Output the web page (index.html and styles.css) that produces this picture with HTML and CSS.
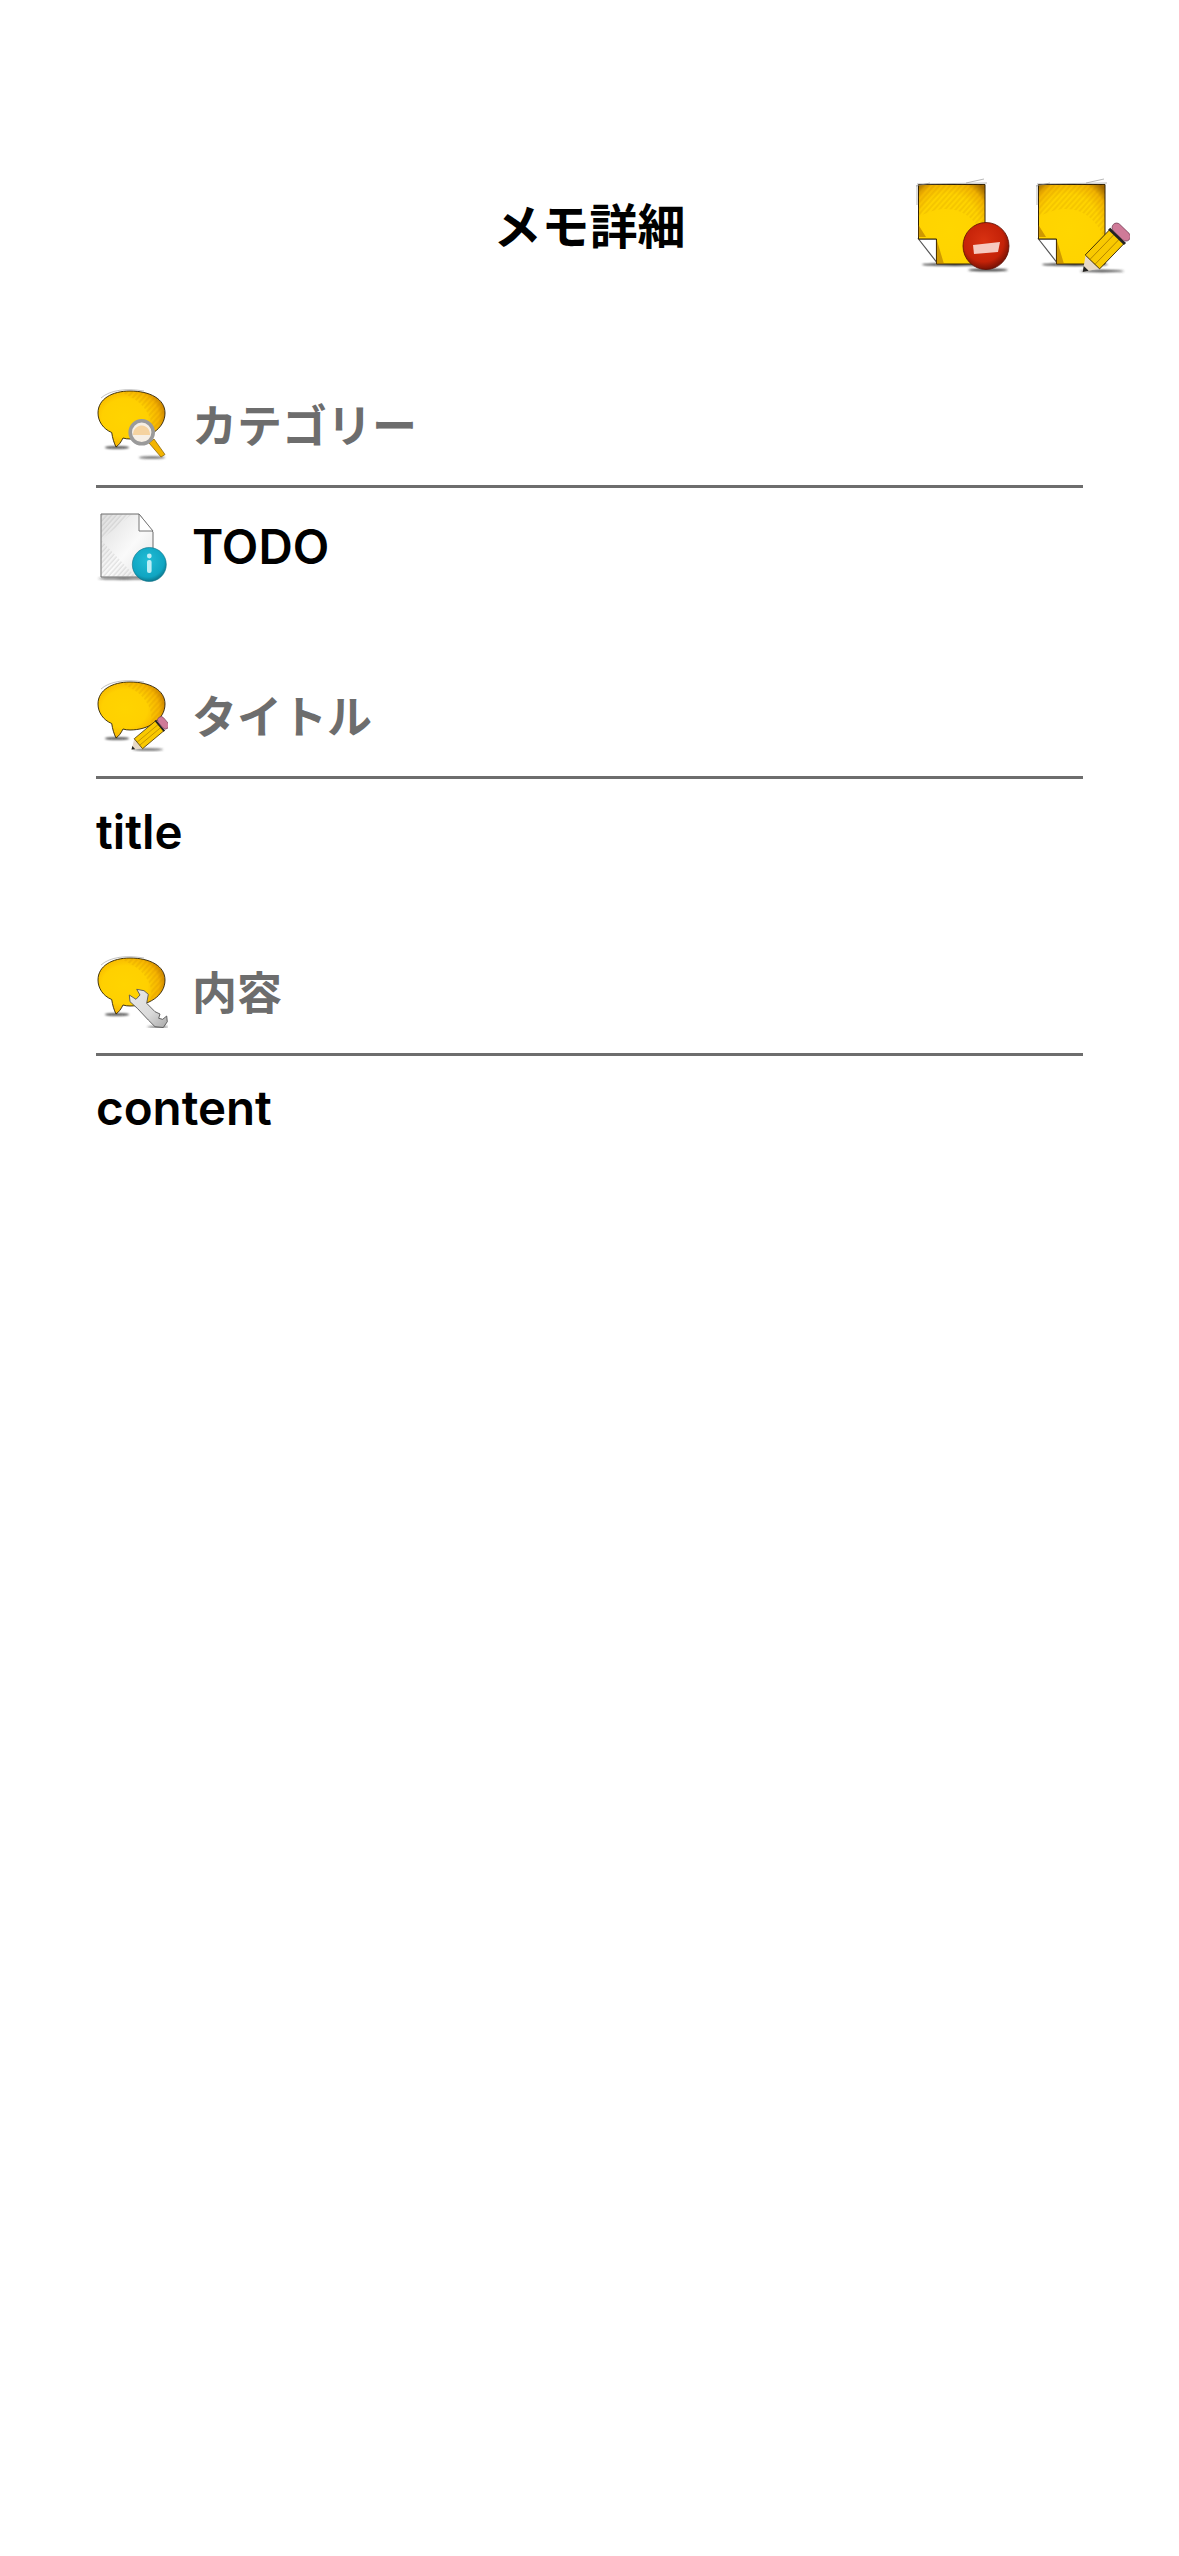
FILE: index.html
```html
<!DOCTYPE html>
<html lang="ja">
<head>
<meta charset="utf-8">
<title>メモ詳細</title>
<link rel="stylesheet" href="styles.css">
</head>
<body>
<svg class="sprite" xmlns="http://www.w3.org/2000/svg" aria-hidden="true">
  <defs>
    <radialGradient id="gBubble" cx="40%" cy="48%" r="62%">
      <stop offset="0" stop-color="#ffd400"/>
      <stop offset=".55" stop-color="#ffd000"/>
      <stop offset=".82" stop-color="#f6b400"/>
      <stop offset="1" stop-color="#c98200"/>
    </radialGradient>
    <radialGradient id="gNote" cx="46%" cy="58%" r="74%">
      <stop offset="0" stop-color="#ffd600"/>
      <stop offset=".62" stop-color="#ffd300"/>
      <stop offset=".84" stop-color="#f2b400"/>
      <stop offset="1" stop-color="#a06800"/>
    </radialGradient>
    <radialGradient id="gRed" cx="45%" cy="40%" r="62%">
      <stop offset="0" stop-color="#d93212"/>
      <stop offset=".7" stop-color="#c42208"/>
      <stop offset="1" stop-color="#701004"/>
    </radialGradient>
    <radialGradient id="gBlue" cx="45%" cy="38%" r="65%">
      <stop offset="0" stop-color="#22bdd6"/>
      <stop offset=".75" stop-color="#10a5c2"/>
      <stop offset="1" stop-color="#0b7085"/>
    </radialGradient>
    <linearGradient id="gPage" x1="0" y1="0" x2="1" y2="1">
      <stop offset="0" stop-color="#dedede"/>
      <stop offset=".55" stop-color="#fafafa"/>
      <stop offset="1" stop-color="#e2e2e2"/>
    </linearGradient>
    <linearGradient id="gSteel" x1="0" y1="0" x2="1" y2="1">
      <stop offset="0" stop-color="#e9e9e9"/>
      <stop offset=".6" stop-color="#dadada"/>
      <stop offset="1" stop-color="#a9a9a9"/>
    </linearGradient>
    <filter id="fBlur" x="-30%" y="-300%" width="160%" height="700%">
      <feGaussianBlur stdDeviation=".8"/>
    </filter>
    <pattern id="pHatch" width="4" height="4" patternUnits="userSpaceOnUse" patternTransform="rotate(-48)">
      <line x1="0" y1="1" x2="4" y2="1" stroke="#b87400" stroke-width=".6" opacity=".5"/>
    </pattern>
    <pattern id="pGrey" width="3.500" height="3.500" patternUnits="userSpaceOnUse" patternTransform="rotate(-48)">
      <line x1="0" y1="1" x2="3.500" y2="1" stroke="#8c8c8c" stroke-width=".5" opacity=".6"/>
    </pattern>

    <symbol id="bubble" viewBox="0 0 72 72">
      <ellipse cx="21" cy="58.500" rx="12" ry="1" fill="#111" filter="url(#fBlur)"/>
      <path d="M2 24C2 10 16 2 34 2C54 2 69 10 69 24C69 40 52 50 34 50C31.500 50 29 49.700 27 49C25 53 23 56 20 58C18 54 16.500 49 15.700 43.500C7 40 2 32 2 24Z" fill="url(#gBubble)" stroke="#2e2106" stroke-width=".9"/>
      <path d="M24 3C46 0 68 9 68.500 24C68.500 32 62 40 54 45C60 28 46 11 24 3Z" fill="url(#pHatch)"/>
      <path d="M5 9C14 1 30 -1 48 2" fill="none" stroke="#9a9a9a" stroke-width=".6"/>
    </symbol>

    <symbol id="note" viewBox="0 0 100 100">
      <ellipse cx="45" cy="89.500" rx="33" ry="1.200" fill="#111" filter="url(#fBlur)"/>
      <path d="M8.500 64L26.500 87V64Z" fill="#fff" stroke="#555" stroke-width="1.200"/>
      <path d="M8.500 9.500H75V89H26.500V64H8.500Z" fill="url(#gNote)" stroke="#2e2106" stroke-width="1"/>
      <path d="M8.500 9.500H75V66C66 38 40 24 8.500 42Z" fill="url(#pHatch)"/>
      <path d="M8.500 62V50L16 62ZM26.500 64L34 89H26.500Z" fill="#a86a00" opacity=".55"/>
      <path d="M6 11L20 8M56 8L74 4M7 9L77 8M7 10V30" fill="none" stroke="#8a8a8a" stroke-width=".6"/>
    </symbol>

    <symbol id="badge-minus" viewBox="0 0 100 100">
      <ellipse cx="78" cy="95" rx="20" ry="1.300" fill="#333" filter="url(#fBlur)"/>
      <ellipse cx="76" cy="71" rx="23" ry="23.500" fill="url(#gRed)" stroke="#5a0d02" stroke-width=".8"/>
      <path d="M63 70L90 67L88 77L64 79Z" fill="#f6c9c0"/>
    </symbol>

    <symbol id="badge-pencil" viewBox="0 0 100 100">
      <ellipse cx="72" cy="96" rx="22" ry="1.200" fill="#444" filter="url(#fBlur)"/>
      <g transform="translate(52.700 97) rotate(-46)">
        <path d="M0 0L14 -9.500V9.500Z" fill="#e7d9c6"/>
        <path d="M0 0L5 -3.400V3.400Z" fill="#222"/>
        <rect x="14" y="-10" width="36" height="20" fill="#f9c900" stroke="#3b2a08" stroke-width=".9"/>
        <path d="M14 -3.500H50M14 3.500H50" stroke="#a87a00" stroke-width=".8"/>
        <rect x="48" y="-11" width="3" height="22" fill="#222"/>
        <rect x="51" y="-11" width="9" height="22" rx="4.500" fill="#cf7a98" stroke="#6e3a50" stroke-width=".7"/>
      </g>
    </symbol>

    <symbol id="small-pencil" viewBox="0 0 72 72">
      <ellipse cx="52" cy="69.500" rx="15" ry=".9" fill="#444" filter="url(#fBlur)"/>
      <g transform="translate(35.500 69.500) rotate(-40)">
        <path d="M0 0L9 -6.400V6.400Z" fill="#e7d9c6"/>
        <path d="M0 0L3 -2.200V2.200Z" fill="#222"/>
        <rect x="9" y="-6.500" width="28" height="13" fill="#f9c900" stroke="#3b2a08" stroke-width=".7"/>
        <path d="M9 -2H37M9 2H37" stroke="#a87a00" stroke-width=".6"/>
        <rect x="36" y="-7" width="2" height="14" fill="#222"/>
        <rect x="38" y="-7" width="7" height="14" rx="3.500" fill="#cf7a98" stroke="#6e3a50" stroke-width=".6"/>
      </g>
    </symbol>

    <symbol id="small-glass" viewBox="0 0 72 72">
      <ellipse cx="56" cy="68.500" rx="13" ry="1" fill="#444" filter="url(#fBlur)"/>
      <path d="M53 54L65 68L69 65.500L58 50Z" fill="#f3b400" stroke="#7c5a00" stroke-width=".7"/>
      <circle cx="45.700" cy="43.300" r="11.500" fill="#f6efe5" stroke="#9a9a9a" stroke-width="3.600"/>
      <path d="M37 46C37 39 42 36.500 46 36.500C50 36.500 54 40 54 46Z" fill="#f5d3a0"/>
    </symbol>

    <symbol id="small-wrench" viewBox="0 0 72 72">
      <ellipse cx="62" cy="71" rx="11" ry=".7" fill="#333" filter="url(#fBlur)"/>
      <path d="M33.300 39L34 45.700L41.300 52.300L52.300 64L59 70.700L67.300 71.500L71.300 65.700L70.700 60L66.700 63.300L62.700 62.300L64 58L59 55.700L50.700 47.300L52.300 38.300L48 34.700L40.700 33.300L44 39L40 43.300Z" fill="url(#gSteel)" stroke="#555" stroke-width=".9" stroke-linejoin="round"/>
    </symbol>

    <symbol id="file-info" viewBox="0 0 72 72">
      <ellipse cx="28" cy="68.500" rx="26" ry=".9" fill="#333" filter="url(#fBlur)"/>
      <path d="M5 4H43L57 22V67H5Z" fill="url(#gPage)" stroke="#6d6d6d" stroke-width="1"/>
      <path d="M5 30L40 67H5Z" fill="url(#pGrey)"/>
      <path d="M5 4H36L5 30Z" fill="url(#pGrey)"/>
      <path d="M43 4V21H57Z" fill="#fff" stroke="#777" stroke-width="1"/>
      <circle cx="53.300" cy="54.500" r="17" fill="url(#gBlue)" stroke="#0c7186" stroke-width=".6"/>
      <circle cx="53.300" cy="46" r="2.400" fill="#bfeef6"/>
      <rect x="51" y="50" width="4.600" height="13" rx="2" fill="#bfeef6"/>
    </symbol>
  </defs>
</svg>

<main class="page">
  <header class="topbar">
    <h1 class="topbar-title">メモ詳細</h1>
    <div class="topbar-actions">
      <button class="icon-btn" type="button" aria-label="削除">
        <svg class="btn-icon" viewBox="0 0 100 100"><use href="#note"/><use href="#badge-minus"/></svg>
      </button>
      <button class="icon-btn" type="button" aria-label="編集">
        <svg class="btn-icon" viewBox="0 0 100 100"><use href="#note"/><use href="#badge-pencil"/></svg>
      </button>
    </div>
  </header>

  <section class="field field-first">
    <div class="field-head">
      <svg class="icon" viewBox="0 0 72 72"><use href="#bubble"/><use href="#small-glass"/></svg>
      <h2 class="field-label">カテゴリー</h2>
    </div>
    <div class="field-value with-icon">
      <svg class="icon" viewBox="0 0 72 72"><use href="#file-info"/></svg>
      <span>TODO</span>
    </div>
  </section>

  <section class="field">
    <div class="field-head">
      <svg class="icon" viewBox="0 0 72 72"><use href="#bubble"/><use href="#small-pencil"/></svg>
      <h2 class="field-label">タイトル</h2>
    </div>
    <div class="field-value">title</div>
  </section>

  <section class="field field-last">
    <div class="field-head">
      <svg class="icon" viewBox="0 0 72 72"><use href="#bubble"/><use href="#small-wrench"/></svg>
      <h2 class="field-label">内容</h2>
    </div>
    <div class="field-value">content</div>
  </section>
</main>
</body>
</html>
```
FILE: styles.css
```css
* { box-sizing: border-box; }
html, body { margin: 0; padding: 0; background: #fff; }
body {
  width: 1179px;
  min-height: 2556px;
  font-family: Inter, "Noto Sans CJK JP", sans-serif;
  color: #000;
}
.sprite { display: block; width: 0; height: 0; overflow: hidden; }
.page { display: flex; flex-direction: column; }

.topbar {
  height: 389px;
  padding: 175px 49px 0 0;
  display: grid;
  grid-template-columns: 1fr;
  align-items: start;
}
.topbar-title {
  grid-area: 1 / 1;
  margin: 0;
  padding-left: 49px;
  height: 100px;
  line-height: 96px;
  text-align: center;
  font-family: "Noto Sans CJK JP", sans-serif;
  font-size: 48px;
  font-weight: 700;
}
.topbar-actions {
  grid-area: 1 / 1;
  display: flex;
  justify-content: flex-end;
  gap: 20px;
}
.icon-btn { padding: 0; border: 0; background: none; width: 100px; height: 100px; }
.btn-icon { display: block; width: 100px; height: 100px; overflow: visible; }

.field { padding: 0 96px; margin-top: 96px; }
.field-first { margin-top: 0; }
.field-head {
  display: flex;
  align-items: flex-start;
  gap: 24px;
  height: 99px;
  border-bottom: 3px solid #6d6d6d;
}
.field-last .field-head { height: 100px; }
.icon { display: block; width: 72px; height: 72px; flex: none; }
.field-label {
  margin: 0;
  height: 72px;
  line-height: 70px;
  font-family: "Noto Sans CJK JP", sans-serif;
  font-size: 45px;
  font-weight: 700;
  color: #6d6d6d;
}
.field-value {
  height: 81px;
  padding-top: 23px;
  line-height: 60px;
  font-size: 47.500px;
  font-weight: 600;
  color: #000;
}
.field-last .field-value { padding-top: 22px; }
.with-icon {
  height: 96px;
  padding-top: 22px;
  display: flex;
  align-items: flex-start;
  gap: 24px;
}
.with-icon span { display: block; height: 72px; line-height: 74px; }
```
